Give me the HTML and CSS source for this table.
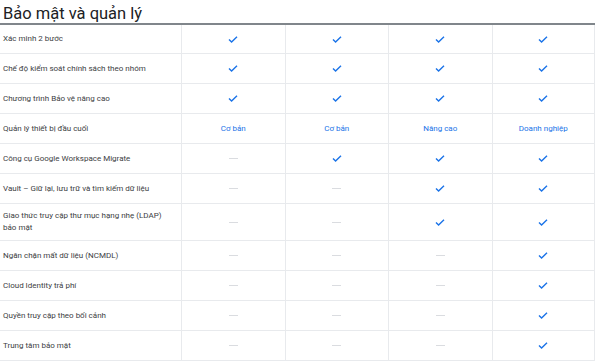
FILE: index.html
```html
<!DOCTYPE html>
<html lang="vi">
<head>
 <meta charset="UTF-8">
 <title>Bảo mật và quản lý</title>
 <link rel="stylesheet" href="styles.css">
</head>
<body>
 <svg width="0" height="0" class="defs">
  <symbol id="check" viewBox="0 0 10 7"><path d="M1 3.4l2.6 2.6L9 0.8" fill="none" stroke="currentColor" stroke-width="1.4"/></symbol>
 </svg>

 <section class="compare">
  <h2 class="compare-title">Bảo mật và quản lý</h2>

  <div class="compare-table">
   <div class="row">
    <div class="label">Xác minh 2 bước</div>
    <div class="cell"><svg class="tick"><use href="#check"/></svg></div>
    <div class="cell"><svg class="tick"><use href="#check"/></svg></div>
    <div class="cell"><svg class="tick"><use href="#check"/></svg></div>
    <div class="cell"><svg class="tick"><use href="#check"/></svg></div>
   </div>
   <div class="row">
    <div class="label">Chế độ kiểm soát chính sách theo nhóm</div>
    <div class="cell"><svg class="tick"><use href="#check"/></svg></div>
    <div class="cell"><svg class="tick"><use href="#check"/></svg></div>
    <div class="cell"><svg class="tick"><use href="#check"/></svg></div>
    <div class="cell"><svg class="tick"><use href="#check"/></svg></div>
   </div>
   <div class="row">
    <div class="label">Chương trình Bảo vệ nâng cao</div>
    <div class="cell"><svg class="tick"><use href="#check"/></svg></div>
    <div class="cell"><svg class="tick"><use href="#check"/></svg></div>
    <div class="cell"><svg class="tick"><use href="#check"/></svg></div>
    <div class="cell"><svg class="tick"><use href="#check"/></svg></div>
   </div>
   <div class="row">
    <div class="label">Quản lý thiết bị đầu cuối</div>
    <div class="cell tier">Cơ bản</div>
    <div class="cell tier">Cơ bản</div>
    <div class="cell tier">Nâng cao</div>
    <div class="cell tier">Doanh nghiệp</div>
   </div>
   <div class="row">
    <div class="label">Công cụ Google Workspace Migrate</div>
    <div class="cell"><span class="dash"></span></div>
    <div class="cell"><svg class="tick"><use href="#check"/></svg></div>
    <div class="cell"><svg class="tick"><use href="#check"/></svg></div>
    <div class="cell"><svg class="tick"><use href="#check"/></svg></div>
   </div>
   <div class="row">
    <div class="label">Vault – Giữ lại, lưu trữ và tìm kiếm dữ liệu</div>
    <div class="cell"><span class="dash"></span></div>
    <div class="cell"><span class="dash"></span></div>
    <div class="cell"><svg class="tick"><use href="#check"/></svg></div>
    <div class="cell"><svg class="tick"><use href="#check"/></svg></div>
   </div>
   <div class="row tall">
    <div class="label">Giao thức truy cập thư mục hạng nhẹ (LDAP)<br>bảo mật</div>
    <div class="cell"><span class="dash"></span></div>
    <div class="cell"><span class="dash"></span></div>
    <div class="cell"><svg class="tick"><use href="#check"/></svg></div>
    <div class="cell"><svg class="tick"><use href="#check"/></svg></div>
   </div>
   <div class="row">
    <div class="label">Ngăn chặn mất dữ liệu (NCMDL)</div>
    <div class="cell"><span class="dash"></span></div>
    <div class="cell"><span class="dash"></span></div>
    <div class="cell"><span class="dash"></span></div>
    <div class="cell"><svg class="tick"><use href="#check"/></svg></div>
   </div>
   <div class="row">
    <div class="label">Cloud Identity trả phí</div>
    <div class="cell"><span class="dash"></span></div>
    <div class="cell"><span class="dash"></span></div>
    <div class="cell"><span class="dash"></span></div>
    <div class="cell"><svg class="tick"><use href="#check"/></svg></div>
   </div>
   <div class="row">
    <div class="label">Quyền truy cập theo bối cảnh</div>
    <div class="cell"><span class="dash"></span></div>
    <div class="cell"><span class="dash"></span></div>
    <div class="cell"><span class="dash"></span></div>
    <div class="cell"><svg class="tick"><use href="#check"/></svg></div>
   </div>
   <div class="row">
    <div class="label">Trung tâm bảo mật</div>
    <div class="cell"><span class="dash"></span></div>
    <div class="cell"><span class="dash"></span></div>
    <div class="cell"><span class="dash"></span></div>
    <div class="cell"><svg class="tick"><use href="#check"/></svg></div>
   </div>
  </div>
 </section>
</body>
</html>
```

FILE: styles.css
```css
:root {
 --text-color: #3c4043;
 --title-color: #202124;
 --blue: #1a73e8;
 --line-color: #e8eaed;
 --head-line: #80868b;
 --dash-color: #dadce0;
}

html,
body {
 margin: 0;
 padding: 0;
 background: #ffffff;
}

body {
 font-family: Roboto, "Noto Sans", sans-serif;
 color: var(--text-color);
}

.defs {
 position: absolute;
}

.compare {
 width: 595px;
}

.compare-title {
 margin: 0;
 padding: 6px 0 0 3px;
 height: 17px;
 font-size: 16.5px;
 font-weight: 400;
 line-height: 16px;
 color: var(--title-color);
 border-bottom: 2px solid var(--head-line);
}

/* each row is its own grid so the label column lines up */
.row {
 display: grid;
 grid-template-columns: 181px repeat(4, 1fr);
 height: 30px;
 border-bottom: 1px solid var(--line-color);
 box-sizing: border-box;
}

.row:first-child {
 height: 29px;
}

.row.tall {
 height: 37px;
}

.label {
 display: flex;
 align-items: center;
 padding-left: 3px;
 font-size: 8px;
 line-height: 12px;
}

.cell {
 display: flex;
 justify-content: center;
 align-items: center;
 border-left: 1px solid var(--line-color);
}

.cell:last-child {
 border-right: 1px solid var(--line-color);
}

.tick {
 width: 10px;
 height: 7px;
 color: var(--blue);
}

.dash {
 display: block;
 width: 9px;
 height: 1px;
 background: var(--dash-color);
}

.tier {
 font-size: 8px;
 color: var(--blue);
}
```
